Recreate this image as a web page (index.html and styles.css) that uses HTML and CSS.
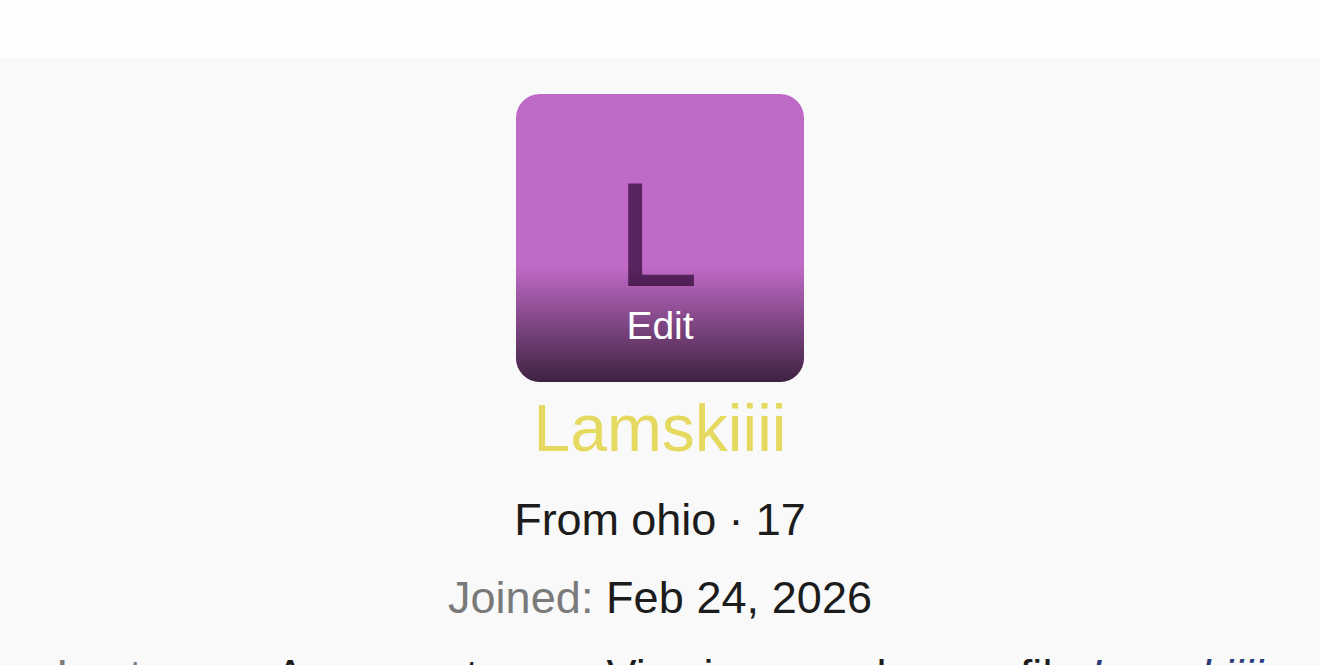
FILE: index.html
```html
<!DOCTYPE html>
<html lang="en">
<head>
<meta charset="utf-8">
<title>Lamskiiii</title>
<link rel="stylesheet" href="styles.css">
</head>
<body>
<main class="profile">
  <div class="avatar">
    <span class="letter">L</span>
    <a class="edit">Edit</a>
  </div>
  <h1 class="name">Lamskiiii</h1>
  <p class="row from">From ohio · 17</p>
  <p class="row joined"><span class="label">Joined:</span> Feb 24, 2026</p>
  <p class="row seen"><span class="label">Last seen:</span> A moment ago · Viewing member profile <a class="link">Lamskiiii</a></p>
</main>
</body>
</html>
```
FILE: styles.css
```css
body {
  margin: 0;
  height: 665px;
  overflow: hidden;
  background: #fefefe;
  font-family: "Liberation Sans", Arial, sans-serif;
  color: #1c1c1c;
}
.profile {
  box-sizing: border-box;
  height: 607px;
  margin-top: 58px;
  padding-top: 36px;
  background: #f9f9f9;
  display: flex;
  flex-direction: column;
  align-items: center;
  overflow: hidden;
}
.avatar {
  position: relative;
  width: 288px;
  height: 288px;
  flex: none;
  border-radius: 24px;
  overflow: hidden;
  background: #c06ac7;
}
.letter {
  display: block;
  padding-right: 5px;
  text-align: center;
  font-size: 149px;
  line-height: 282px;
  color: #59235f;
}
.edit {
  position: absolute;
  left: 0;
  right: 0;
  bottom: 0;
  height: 116px;
  box-sizing: border-box;
  padding-top: 38px;
  text-align: center;
  font-size: 39px;
  line-height: 44px;
  color: #fff;
  background: linear-gradient(transparent, rgba(0, 0, 0, .68));
}
.name {
  margin: 0;
  flex: none;
  font-size: 66px;
  font-weight: 400;
  line-height: 92px;
  color: #e6d95f;
}
.row {
  margin: 0;
  flex: none;
  font-size: 45px;
  line-height: 66px;
  white-space: nowrap;
}
.from { margin-top: 13px; letter-spacing: -.08px; }
.joined { margin-top: 12px; letter-spacing: .07px; }
.seen { margin-top: 12px; letter-spacing: .08px; }
.label { color: #7a7a7a; }
.link { color: #2c3b7d; font-style: italic; }
```
